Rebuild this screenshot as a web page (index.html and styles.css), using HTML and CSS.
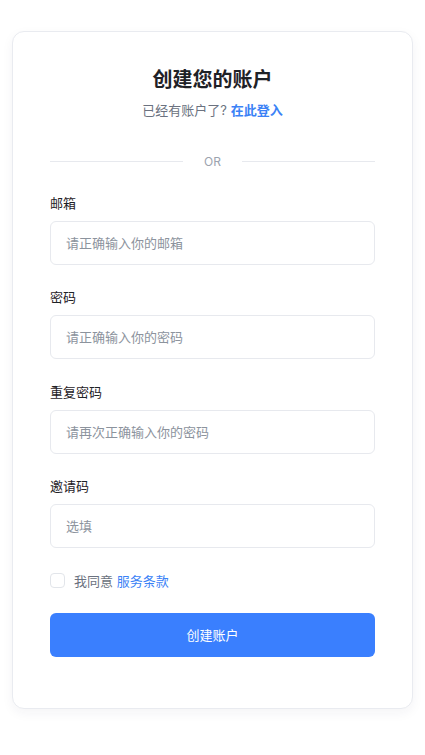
FILE: index.html
```html
<!DOCTYPE html>
<html lang="zh-CN">
<head>
  <meta charset="UTF-8">
  <title>创建您的账户</title>
  <link rel="stylesheet" href="styles.css">
</head>
<body>

  <div class="card">
    <h1>创建您的账户</h1>
    <p class="subtitle">已经有账户了? <a href="#">在此登入</a></p>

    <div class="divider"><span>OR</span></div>

    <form class="form">
      <div class="field">
        <label for="email">邮箱</label>
        <input id="email" type="email" placeholder="请正确输入你的邮箱">
      </div>
      <div class="field">
        <label for="password">密码</label>
        <input id="password" type="password" placeholder="请正确输入你的密码">
      </div>
      <div class="field">
        <label for="repeat">重复密码</label>
        <input id="repeat" type="password" placeholder="请再次正确输入你的密码">
      </div>
      <div class="field">
        <label for="invite">邀请码</label>
        <input id="invite" type="text" placeholder="选填">
      </div>

      <label class="agree">
        <input type="checkbox">
        <span>我同意 <a href="#">服务条款</a></span>
      </label>

      <button type="submit">创建账户</button>
    </form>
  </div>

</body>
</html>
```

FILE: styles.css
```css
* {
  box-sizing: border-box;
}

body {
  margin: 0;
  padding: 31px 12px 40px;
  background: #ffffff;
  font-family: Inter, "Noto Sans CJK SC", sans-serif;
  color: #1f2937;
}

.card {
  background: #ffffff;
  border: 1px solid #e9ebf0;
  border-radius: 12px;
  box-shadow: 0 4px 12px rgba(30, 40, 80, 0.05);
  padding: 34px 37px 51px;
}

h1 {
  margin: 0;
  text-align: center;
  font-size: 20px;
  line-height: 28px;
  font-weight: 600;
  color: #1f2227;
}

.subtitle {
  margin: 6px 0 0;
  text-align: center;
  font-size: 13px;
  line-height: 20px;
  color: #6b7280;
}

a {
  color: #3b82f6;
  text-decoration: none;
}

.subtitle a {
  font-weight: 600;
}

.divider {
  margin-top: 31px;
  display: flex;
  align-items: center;
  gap: 21px;
  height: 20px;
  font-size: 12px;
  color: #9ca3af;
}

.divider::before,
.divider::after {
  content: "";
  flex: 1;
  height: 1px;
  background: #e7e9ee;
}

.form {
  margin: 22px 0 0;
  display: flex;
  flex-direction: column;
}

.field {
  display: flex;
  flex-direction: column;
  gap: 8px;
  margin-bottom: 22.4px;
}

.field label {
  font-size: 13px;
  line-height: 20px;
  color: #1f2227;
}

.field input {
  height: 44px;
  border: 1px solid #e7e9ee;
  border-radius: 6px;
  padding: 0 15px;
  font-family: inherit;
  font-size: 13px;
  color: #1f2937;
  outline: none;
}

.field input::placeholder {
  color: #8c939d;
}

.agree {
  display: flex;
  align-items: center;
  gap: 9px;
  height: 20px;
  font-size: 13px;
  color: #6b7280;
}

.agree input {
  appearance: none;
  margin: 0;
  width: 15px;
  height: 15px;
  border: 1px solid #e2e5ea;
  border-radius: 4px;
  background: #ffffff;
}

button {
  margin-top: 22px;
  height: 44px;
  border: none;
  border-radius: 6px;
  background: #3a7ffe;
  color: #ffffff;
  font-family: inherit;
  font-size: 13px;
  cursor: pointer;
}
```
